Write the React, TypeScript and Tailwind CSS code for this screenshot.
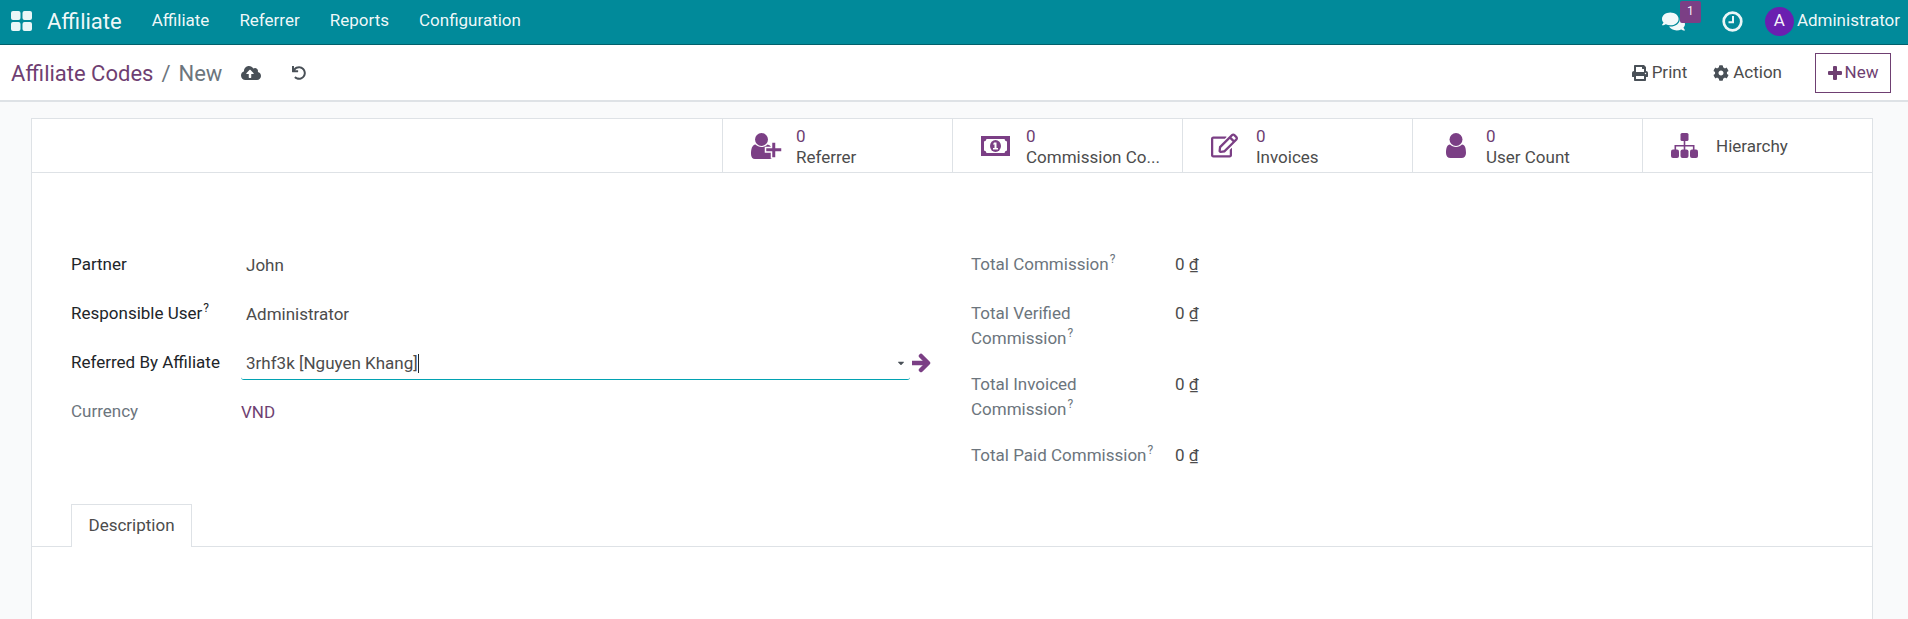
import React from 'react';
import {
  FaCaretDown,
  FaCloudUploadAlt,
  FaCog,
  FaComments,
  FaPrint,
  FaRegEdit,
  FaUndo,
} from 'react-icons/fa';

const AppsIcon = () => (
  <svg width="21" height="20" viewBox="0 0 21 20" fill="#eaf6f7">
    <rect x="0" y="0" width="9.500" height="9" rx="2" />
    <rect x="11.500" y="0" width="9.500" height="9" rx="2" />
    <rect x="0" y="11" width="9.500" height="9" rx="2" />
    <rect x="11.500" y="11" width="9.500" height="9" rx="2" />
  </svg>
);

const BillIcon = () => (
  <svg width="29" height="20" viewBox="0 0 29 20" fill="#7b3f85">
    <path
      fillRule="evenodd"
      d="M0 0h29v20H0zM3 5.500a3 3 0 0 0 2.500-2.500h18a3 3 0 0 0 2.500 2.500v9a3 3 0 0 0-2.500 2.500h-18a3 3 0 0 0-2.500-2.500z"
    />
    <ellipse cx="14.500" cy="10" rx="5.500" ry="6" />
    <path fill="#fff" d="M13 6.500h2.500V12H17v1.500h-5V12h1.500V8.500H12z" />
  </svg>
);

const UserPlusIcon = () => (
  <svg width="31" height="26" viewBox="0 0 31 26" fill="#7b3f85">
    <circle cx="10.500" cy="6.500" r="6.500" />
    <path d="M0 21c0-5 1-9 4.500-9.500C6 13 8 14 10.500 14s4.500-1 6-2.500c3 .4 4.500 3 4.500 6V26H4c-2.500 0-4-2-4-5z" />
    <path
      stroke="#fff"
      strokeWidth="1.500"
      d="M20.500 9h4.500v5.500h6V19h-6v6h-4.500v-6h-6v-4.500h6z"
    />
  </svg>
);

const UserIcon = () => (
  <svg width="20" height="25" viewBox="0 0 20 25" fill="#7b3f85" className="ml-[5px]">
    <ellipse cx="10" cy="6.500" rx="6.500" ry="6.500" />
    <path d="M0 20c0-5 1-8 4-8.500C5.500 13 7.500 14 10 14s4.500-1 6-2.500c3 .5 4 3.500 4 8.500 0 3-1.800 5-4.500 5h-11C1.800 25 0 23 0 20z" />
  </svg>
);

const SitemapIcon = () => (
  <svg width="27" height="25" viewBox="0 0 27 25" fill="#7b3f85">
    <rect x="9.500" y="0" width="8" height="8" rx="1.500" />
    <path d="M12.700 8h1.600v4h9.200v5h-1.600v-3.400h-7.600V17h-1.600v-3.400H5.100V17H3.500v-5h9.200z" />
    <rect x="0" y="16.500" width="8" height="8.500" rx="2" />
    <rect x="9.500" y="16.500" width="8" height="8.500" rx="2" />
    <rect x="19" y="16.500" width="8" height="8.500" rx="2" />
  </svg>
);

const ArrowIcon = () => (
  <svg width="21" height="20" viewBox="0 0 21 20" fill="none" stroke="#7b3f85" strokeWidth="4.500">
    <path d="M1 10h15" />
    <path d="M10 3l7 7-7 7" strokeLinecap="round" strokeLinejoin="round" />
  </svg>
);

const ClockIcon = () => (
  <svg width="21" height="21" viewBox="0 0 21 21" fill="none" stroke="#eaf6f7">
    <circle cx="10.500" cy="10.500" r="8.800" strokeWidth="2.700" />
    <path d="M11 5v6.200H6.500" strokeWidth="2" />
  </svg>
);

const PlusIcon = () => (
  <svg width="14" height="14" viewBox="0 0 14 14" fill="#6f3f72">
    <path d="M5 1a1 1 0 0 1 1-1h2a1 1 0 0 1 1 1v4h4a1 1 0 0 1 1 1v2a1 1 0 0 1-1 1H9v4a1 1 0 0 1-1 1H6a1 1 0 0 1-1-1V9H1a1 1 0 0 1-1-1V6a1 1 0 0 1 1-1h4z" />
  </svg>
);

const Help = () => <sup className="text-[12px] ml-px top-[-7px] leading-none">?</sup>;

const stats = [
  { icon: <UserPlusIcon />, count: '0', label: 'Referrer' },
  { icon: <BillIcon />, count: '0', label: 'Commission Co...' },
  { icon: <FaRegEdit size={27} />, count: '0', label: 'Invoices' },
  { icon: <UserIcon />, count: '0', label: 'User Count' },
  { icon: <SitemapIcon />, label: 'Hierarchy' },
];

const menus = ['Affiliate', 'Referrer', 'Reports', 'Configuration'];

const totals: { lines: string[]; height: string }[] = [
  { lines: ['Total Commission'], height: 'h-[49px]' },
  { lines: ['Total Verified', 'Commission'], height: 'h-[71px]' },
  { lines: ['Total Invoiced', 'Commission'], height: 'h-[71px]' },
  { lines: ['Total Paid Commission'], height: 'h-[49px]' },
];

export default function App() {
  return (
    <div className="h-[619px] overflow-hidden bg-[#f9fafb] text-[17px] text-[#4c4c4c] font-['Roboto',sans-serif]">
      <nav className="h-[45px] pb-[2px] bg-[#018a9a] border-b border-[#01606b] flex items-center text-white/95">
        <div className="pl-[11px] pr-[15px] flex items-center">
          <AppsIcon />
        </div>
        <span className="text-[22px] mr-[15px]">Affiliate</span>
        {menus.map((m) => (
          <span key={m} className="px-[15px]">
            {m}
          </span>
        ))}
        <div className="ml-auto flex items-center pr-[8px]">
          <div className="relative mr-[22px]">
            <FaComments size={23} />
            <span className="absolute -top-[9px] left-[18px] w-[21px] h-[22px] bg-[#7b3f85] rounded-[2px] text-[12px] text-center leading-[20px]">
              1
            </span>
          </div>
          <span className="ml-[15px]">
            <ClockIcon />
          </span>
          <span className="ml-[22px] w-[29px] h-[29px] rounded-full bg-[#6a1fb0] flex items-center justify-center">
            A
          </span>
          <span className="ml-[3px]">Administrator</span>
        </div>
      </nav>

      <header className="h-[57px] bg-white border-b-2 border-[#dee2e6] flex items-center pl-[11px] pr-[17px]">
        <span className="text-[22px] pt-px text-[#6f3f72]">Affiliate Codes</span>
        <span className="text-[22px] pt-px text-[#6c757d] mx-[8px]">/</span>
        <span className="text-[22px] pt-px text-[#6c757d]">New</span>
        <FaCloudUploadAlt size={20} className="ml-[19px] text-[#495057]" />
        <FaUndo size={14} className="ml-[31px] text-[#495057]" />
        <div className="ml-auto flex items-center">
          <FaPrint size={16} className="text-[#495057]" />
          <span className="ml-[4px]">Print</span>
          <FaCog size={16} className="ml-[26px] text-[#495057]" />
          <span className="ml-[4px]">Action</span>
          <button className="ml-[33px] w-[76px] h-[40px] border border-[#6f3f72] text-[#6f3f72] flex items-center justify-center gap-[3px]">
            <PlusIcon />
            New
          </button>
        </div>
      </header>

      <main className="mt-[16px] ml-[31px] mr-[35px] h-[510px] bg-white border border-[#dee2e6]">
        <div className="h-[54px] border-b border-[#dee2e6] flex justify-end">
          {stats.map((s) => (
            <div key={s.label} className="w-[230px] border-l border-[#dee2e6] flex items-center">
              <span className="w-[73px] pl-[28px] flex justify-start">
                <span className="text-[#7b3f85]">{s.icon}</span>
              </span>
              <div className="leading-[21px] pt-[2px]">
                {s.count && <div className="text-[#6f3f72]">{s.count}</div>}
                <div>{s.label}</div>
              </div>
            </div>
          ))}
        </div>

        <div className="flex pt-[79px] pl-[39px] h-[331px]">
          <div className="w-[900px]">
            <div className="flex h-[49px] leading-[24px]">
              <span className="w-[175px] text-[#212529]">Partner</span>
              <span className="pt-px">John</span>
            </div>
            <div className="flex h-[49px] leading-[24px]">
              <span className="w-[175px] text-[#212529]">
                Responsible User<Help />
              </span>
              <span className="pt-px">Administrator</span>
            </div>
            <div className="flex h-[49px] leading-[24px]">
              <span className="w-[170px] text-[#212529]">Referred By Affiliate</span>
              <div className="w-[669px] h-[30px] border-b border-[#01a2b2] pl-[5px] pt-px flex items-start rounded-b-[3px]">
                <span>3rhf3k [Nguyen Khang]</span>
                <span className="w-px h-[19px] mt-[3px] bg-[#212529]" />
                <FaCaretDown size={10} className="ml-auto mr-[4px] mt-[7px] text-[#495057]" />
              </div>
              <span className="ml-[1px] mt-[3px]">
                <ArrowIcon />
              </span>
            </div>
            <div className="flex h-[49px] leading-[24px]">
              <span className="w-[170px] text-[#6c757d]">Currency</span>
              <span className="text-[#6f3f72] pt-px">VND</span>
            </div>
          </div>
          <div>
            {totals.map((t) => (
              <div key={t.lines.join()} className={`flex leading-[25px] ${t.height}`}>
                <div className="w-[204px] text-[#6c757d]">
                  {t.lines.map((l, i) => (
                    <div key={l}>
                      {l}
                      {i === t.lines.length - 1 && <Help />}
                    </div>
                  ))}
                </div>
                <span>
                  0 <span className="underline">₫</span>
                </span>
              </div>
            ))}
          </div>
        </div>

        <div className="h-[43px] border-b border-[#dee2e6] pl-[39px]">
          <div className="w-[121px] h-[43px] bg-white border border-b-0 border-[#dee2e6] flex items-center justify-center">
            Description
          </div>
        </div>
      </main>
    </div>
  );
}
